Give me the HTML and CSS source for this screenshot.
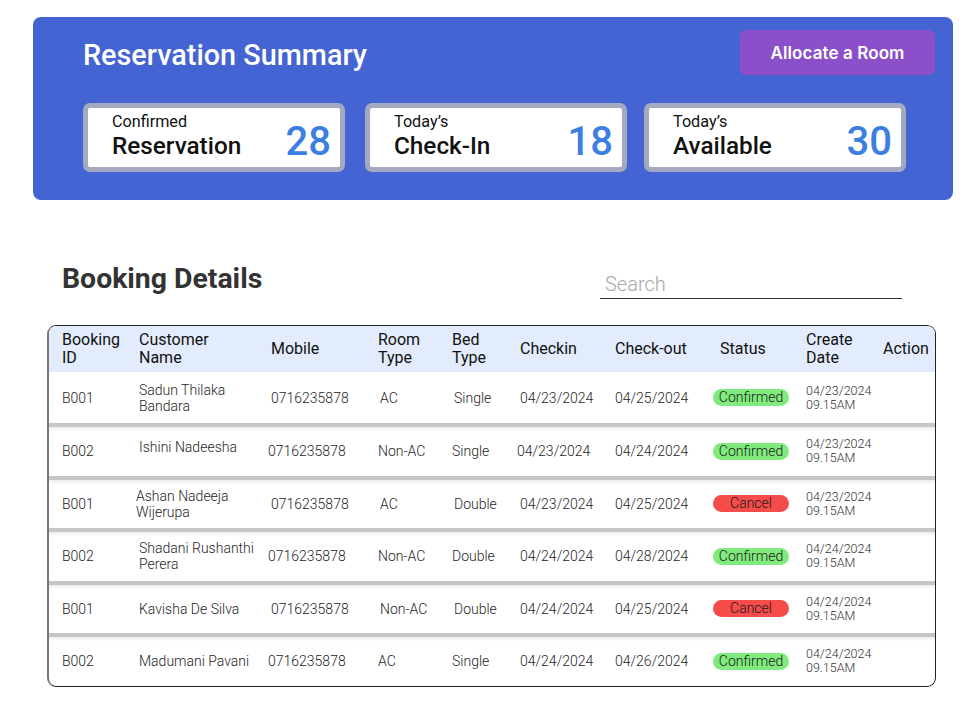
FILE: index.html
```html
<!DOCTYPE html>
<html lang="en">
<head>
<meta charset="utf-8">
<title>Reservation Summary</title>
<link rel="stylesheet" href="styles.css">
</head>
<body>
<div class="page">
  <section class="summary">
    <div class="summary-head">
      <h1 class="summary-title">Reservation Summary</h1>
      <button class="allocate-btn">Allocate a Room</button>
    </div>
    <div class="cards">
      <div class="card">
        <div class="card-text">
          <div class="card-small">Confirmed</div>
          <div class="card-big">Reservation</div>
        </div>
        <div class="card-num">28</div>
      </div>
      <div class="card">
        <div class="card-text">
          <div class="card-small">Today’s</div>
          <div class="card-big">Check-In</div>
        </div>
        <div class="card-num">18</div>
      </div>
      <div class="card">
        <div class="card-text">
          <div class="card-small">Today’s</div>
          <div class="card-big">Available</div>
        </div>
        <div class="card-num">30</div>
      </div>
    </div>
  </section>

  <div class="booking-head">
    <h2 class="booking-title">Booking Details</h2>
    <div class="search">Search</div>
  </div>

  <div class="table">
    <div class="row header">
      <div>Booking<br>ID</div>
      <div>Customer<br>Name</div>
      <div>Mobile</div>
      <div>Room<br>Type</div>
      <div>Bed<br>Type</div>
      <div>Checkin</div>
      <div>Check-out</div>
      <div>Status</div>
      <div>Create<br>Date</div>
      <div>Action</div>
    </div>

    <div class="row body first">
      <div>B001</div>
      <div class="name">Sadun Thilaka<br>Bandara</div>
      <div>0716235878</div>
      <div class="ind">AC</div>
      <div class="ind">Single</div>
      <div>04/23/2024</div>
      <div>04/25/2024</div>
      <div><span class="pill ok">Confirmed</span></div>
      <div class="created">04/23/2024<br>09.15AM</div>
      <div></div>
    </div>

    <div class="row body">
      <div>B002</div>
      <div class="name up">Ishini Nadeesha</div>
      <div class="back">0716235878</div>
      <div>Non-AC</div>
      <div>Single</div>
      <div class="back">04/23/2024</div>
      <div>04/24/2024</div>
      <div><span class="pill ok">Confirmed</span></div>
      <div class="created">04/23/2024<br>09.15AM</div>
      <div></div>
    </div>

    <div class="row body">
      <div>B001</div>
      <div class="name back">Ashan Nadeeja<br>Wijerupa</div>
      <div>0716235878</div>
      <div class="ind">AC</div>
      <div class="ind">Double</div>
      <div>04/23/2024</div>
      <div>04/25/2024</div>
      <div><span class="pill bad">Cancel</span></div>
      <div class="created">04/23/2024<br>09.15AM</div>
      <div></div>
    </div>

    <div class="row body">
      <div>B002</div>
      <div class="name">Shadani Rushanthi<br>Perera</div>
      <div class="back">0716235878</div>
      <div>Non-AC</div>
      <div>Double</div>
      <div>04/24/2024</div>
      <div>04/28/2024</div>
      <div><span class="pill ok">Confirmed</span></div>
      <div class="created">04/24/2024<br>09.15AM</div>
      <div></div>
    </div>

    <div class="row body">
      <div>B001</div>
      <div class="name">Kavisha De Silva</div>
      <div>0716235878</div>
      <div class="ind">Non-AC</div>
      <div class="ind">Double</div>
      <div>04/24/2024</div>
      <div>04/25/2024</div>
      <div><span class="pill bad">Cancel</span></div>
      <div class="created">04/24/2024<br>09.15AM</div>
      <div></div>
    </div>

    <div class="row body">
      <div>B002</div>
      <div class="name">Madumani Pavani</div>
      <div class="back">0716235878</div>
      <div>AC</div>
      <div>Single</div>
      <div>04/24/2024</div>
      <div>04/26/2024</div>
      <div><span class="pill ok">Confirmed</span></div>
      <div class="created">04/24/2024<br>09.15AM</div>
      <div></div>
    </div>
  </div>
</div>
</body>
</html>
```

FILE: styles.css
```css
* { box-sizing: border-box; }

html, body {
  margin: 0;
  padding: 0;
  background: #ffffff;
}

body {
  font-family: Roboto, "Liberation Sans", Arial, sans-serif;
  color: #222;
  width: 965px;
}

.page {
  padding-top: 17px;
}

/* ---------- Summary panel ---------- */
.summary {
  margin-left: 33px;
  width: 920px;
  height: 183px;
  background: #4464d4;
  border-radius: 8px;
  padding: 13px 18px 0 50px;
}

.summary-head {
  display: flex;
  justify-content: space-between;
  align-items: flex-start;
  height: 73px;
}

.summary-title {
  margin: 0;
  padding-top: 9px;
  font-size: 28.8px;
  font-weight: 500;
  color: #ffffff;
  line-height: 33px;
}

.allocate-btn {
  width: 195px;
  height: 45px;
  border: none;
  border-radius: 6px;
  background: #8a4fc9;
  color: #ffffff;
  font-family: Inter, Roboto, sans-serif;
  font-size: 17px;
  font-weight: 600;
  padding: 0;
  letter-spacing: 0.1px;
}

.cards {
  display: flex;
  gap: 20px;
}

.card {
  width: 262px;
  height: 69px;
  background: #ffffff;
  border: 5px solid #a2a9c1;
  border-radius: 7px;
  display: flex;
  align-items: center;
  justify-content: space-between;
  padding: 0 9px 0 24px;
}

.cards .card:nth-child(3) { margin-left: -3px; }

.card-text {
  display: flex;
  flex-direction: column;
  margin-top: -3px;
}

.card-small {
  font-size: 16.2px;
  line-height: 18px;
  color: #111;
}

.card-big {
  font-size: 24.3px;
  line-height: 29px;
  font-weight: 500;
  color: #111;
}

.card-num {
  font-size: 40px;
  font-weight: 500;
  color: #3b7fe3;
  line-height: 44px;
  padding-top: 8px;
}

/* ---------- Booking heading ---------- */
.booking-head {
  display: flex;
  align-items: flex-start;
  margin-top: 62px;
  padding-left: 62px;
  height: 63px;
}

.booking-title {
  margin: 0;
  font-size: 28.4px;
  line-height: 33px;
  font-weight: 700;
  color: #333333;
  width: 538px;
}

.search {
  margin-top: 11px;
  width: 302px;
  border-bottom: 1px solid #333;
  font-size: 20px;
  font-weight: 300;
  line-height: 22px;
  color: #a8a8a8;
  padding: 0 0 3px 5px;
}

/* ---------- Table ---------- */
.table {
  margin-left: 47px;
  width: 889px;
  border: 1px solid #222;
  border-left: 2px solid #777;
  border-radius: 9px;
  overflow: hidden;
}

.row {
  display: grid;
  grid-template-columns: 77px 132px 107px 74px 68px 95px 105px 86px 77px 1fr;
  align-items: center;
  padding-left: 13px;
}

.row.header {
  height: 46px;
  background: #e3ecfc;
  font-size: 16px;
  line-height: 18px;
  color: #111;
}

.row.body {
  height: 52.5px;
  border-top: 4px solid #c6c6c6;
  box-shadow: inset 0 3px 3px -1px rgba(0, 0, 0, 0.08);
  font-size: 14px;
  font-weight: 300;
  color: #1e1e1e;
  line-height: 16px;
}

.row.body.first {
  height: 51px;
  border-top: none;
  box-shadow: none;
}

.row.body > div { position: relative; }

.name { font-size: 14px; line-height: 16px; }
.up { top: -4px; }
.back { margin-left: -3px; }
.ind { margin-left: 2px; }

.pill {
  display: inline-block;
  width: 76px;
  height: 17px;
  border-radius: 9px;
  margin-left: -7px;
  text-align: center;
  font-size: 14px;
  line-height: 17px;
  font-weight: 300;
  color: #1a1a1a;
}

.pill.ok { background: #80ea7c; }
.pill.bad { background: #f44b4b; }

.created {
  font-size: 12.5px;
  line-height: 14px;
  color: #333;
}
```
